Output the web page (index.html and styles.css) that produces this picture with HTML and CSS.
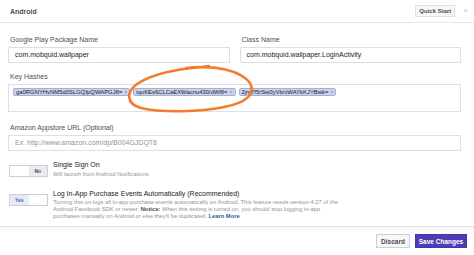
FILE: index.html
```html
<!DOCTYPE html>
<html>
<head>
<meta charset="utf-8">
<link rel="stylesheet" href="styles.css">
</head>
<body>
<div class="dialog">
  <header class="hdr">
    <span class="hdr-title">Android</span>
    <div class="hdr-actions">
      <button class="btn btn-qs">Quick Start</button>
      <span class="close">&#215;</span>
    </div>
  </header>
  <main class="form">
    <div class="row2">
      <div class="field">
        <div class="label">Google Play Package Name</div>
        <div class="input">com.mobquid.wallpaper</div>
      </div>
      <div class="field">
        <div class="label">Class Name</div>
        <div class="input">com.mobquid.wallpaper.LoginActivity</div>
      </div>
    </div>
    <div class="field hashes">
      <div class="label">Key Hashes</div>
      <div class="tokens">
        <span class="token">ga0RGNYHvNM5d0SLGQfpQWAPGJ8=<span class="x">&#215;</span></span>
        <span class="token">iquKEs6CLCaEXWacnu430/dWl8=<span class="x">&#215;</span></span>
        <span class="token">2jm7f5rSw0yVb/vWAYkKJYBwk=<span class="x">&#215;</span></span>
      </div>
    </div>
    <div class="field amazon">
      <div class="label">Amazon Appstore URL (Optional)</div>
      <div class="input placeholder">Ex. http://www.amazon.com/dp/B004GJDQT8</div>
    </div>
    <div class="switch-row sso">
      <div class="toggle">
        <span class="half"></span>
        <span class="half no">No</span>
      </div>
      <div class="switch-text">
        <div class="switch-title">Single Sign On</div>
        <div class="switch-desc">Will launch from Android Notifications</div>
      </div>
    </div>
    <div class="switch-row">
      <div class="toggle">
        <span class="half yes">Yes</span>
        <span class="half"></span>
      </div>
      <div class="switch-text">
        <div class="switch-title">Log In-App Purchase Events Automatically (Recommended)</div>
        <div class="switch-desc">Turning this on logs all in-app purchase events automatically on Android. This feature needs version 4.27 of the<br>Android Facebook SDK or newer. <b>Notice:</b> When this setting is turned on, you should stop logging in-app<br>purchases manually on Android or else they'll be duplicated. <a class="learn">Learn More</a></div>
      </div>
    </div>
  </main>
  <footer class="ftr">
    <button class="btn btn-discard">Discard</button>
    <button class="btn btn-save">Save Changes</button>
  </footer>
  <svg class="annot" width="474" height="255" viewBox="0 0 474 255">
    <path d="M 186 68 C 215 65, 240 70, 250 83 C 256 94, 246 103, 224 107 C 200 112, 162 113, 141 108 C 126 104, 126 92, 137 84 C 152 74, 176 69, 203 67 L 209 66" fill="none" stroke="#f47a2c" stroke-width="2.6" stroke-linecap="round" stroke-linejoin="round"/>
  </svg>
</div>
</body>
</html>
```
FILE: styles.css
```css
* {
  box-sizing: border-box;
  margin: 0;
  padding: 0;
}

body {
  margin: 0;
  width: 474px;
  height: 255px;
  overflow: hidden;
  background: #fff;
  font-family: "Liberation Sans", Arial, sans-serif;
  color: #1d2129;
}

.dialog {
  position: relative;
  width: 474px;
  height: 255px;
  background: #fff;
}

.hdr {
  height: 23px;
  border-bottom: 1px solid #e5e5e5;
  display: flex;
  align-items: center;
  justify-content: space-between;
  padding: 0 6px 0 10px;
}

.hdr-title {
  font-size: 7px;
  font-weight: bold;
  color: #4b4f56;
}

.hdr-actions {
  display: flex;
  align-items: center;
  gap: 8px;
}

.btn {
  font-family: "Liberation Sans", Arial, sans-serif;
  font-weight: bold;
  cursor: pointer;
}

.btn-qs {
  height: 12px;
  padding: 0 3px;
  border: 1px solid #dddfe2;
  background: #f6f7f9;
  font-size: 6px;
  color: #4b4f56;
}

.close {
  font-size: 8px;
  color: #bec2c9;
  line-height: 8px;
}

.form {
  padding: 12px 13px 0 8px;
  display: flex;
  flex-direction: column;
}

.row2 {
  display: grid;
  grid-template-columns: 1fr 1fr;
  gap: 10px;
  margin-bottom: 9px;
}

.label {
  font-size: 7px;
  line-height: 10px;
  color: #4b4f56;
  padding-left: 2px;
  margin-bottom: 2px;
}

.input {
  height: 16px;
  border: 1px solid #dddfe2;
  padding: 0 6px;
  font-size: 7px;
  line-height: 14px;
  color: #1d2129;
  white-space: nowrap;
}

.input.placeholder {
  color: #90949c;
}

.hashes {
  margin-bottom: 11px;
}

.tokens {
  height: 28px;
  border: 1px solid #dddfe2;
  padding: 3px 4px;
  display: flex;
  align-items: flex-start;
  gap: 3px;
}

.token {
  height: 8px;
  display: flex;
  align-items: center;
  gap: 2px;
  padding: 0 2px;
  border: 1px solid #a4aed6;
  border-radius: 2px;
  background: #cdd3ea;
  font-size: 5.9px;
  line-height: 6px;
  color: #1d2129;
  white-space: nowrap;
}

.token .x {
  font-size: 5px;
  color: #7a86b8;
}

.amazon {
  margin-bottom: 9px;
}

.switch-row {
  display: flex;
  align-items: flex-start;
  gap: 5px;
  padding-left: 1px;
}

.switch-row.sso {
  margin-bottom: 11px;
}

.toggle {
  margin-top: 5px;
  width: 39px;
  height: 12px;
  border: 1px solid #ccd0d5;
  display: flex;
  flex-shrink: 0;
}

.half {
  flex: 1;
  display: flex;
  align-items: center;
  justify-content: center;
  font-size: 5px;
  font-weight: bold;
}

.half.no {
  background: #e9ebee;
  color: #4b4f56;
}

.half.yes {
  background: #e7eaf4;
  color: #4267b2;
}

.switch-title {
  font-size: 7px;
  line-height: 10px;
  color: #1d2129;
  white-space: nowrap;
}

.switch-desc {
  font-size: 5.8px;
  line-height: 7px;
  color: #90949c;
  white-space: nowrap;
}

.sso .switch-desc {
  line-height: 8px;
}

.switch-desc b {
  color: #4b4f56;
}

.learn {
  color: #365899;
  font-weight: bold;
}

.ftr {
  position: absolute;
  left: 0;
  right: 0;
  top: 226px;
  bottom: 0;
  border-top: 1px solid #dddfe2;
  background: linear-gradient(#f4f5f7, #fff 4px);
  display: flex;
  justify-content: flex-end;
  align-items: flex-start;
  gap: 5px;
  padding: 7px 7px 0 0;
}

.btn-discard {
  height: 14px;
  width: 34px;
  border: 1px solid #ccd0d5;
  background: #f6f7f9;
  color: #4b4f56;
  font-size: 6.5px;
}

.btn-save {
  height: 14px;
  width: 52px;
  border: 1px solid #4337a8;
  background: #4c3db4;
  color: #fff;
  font-size: 6.5px;
}

.annot {
  position: absolute;
  left: 0;
  top: 0;
  pointer-events: none;
}
```
